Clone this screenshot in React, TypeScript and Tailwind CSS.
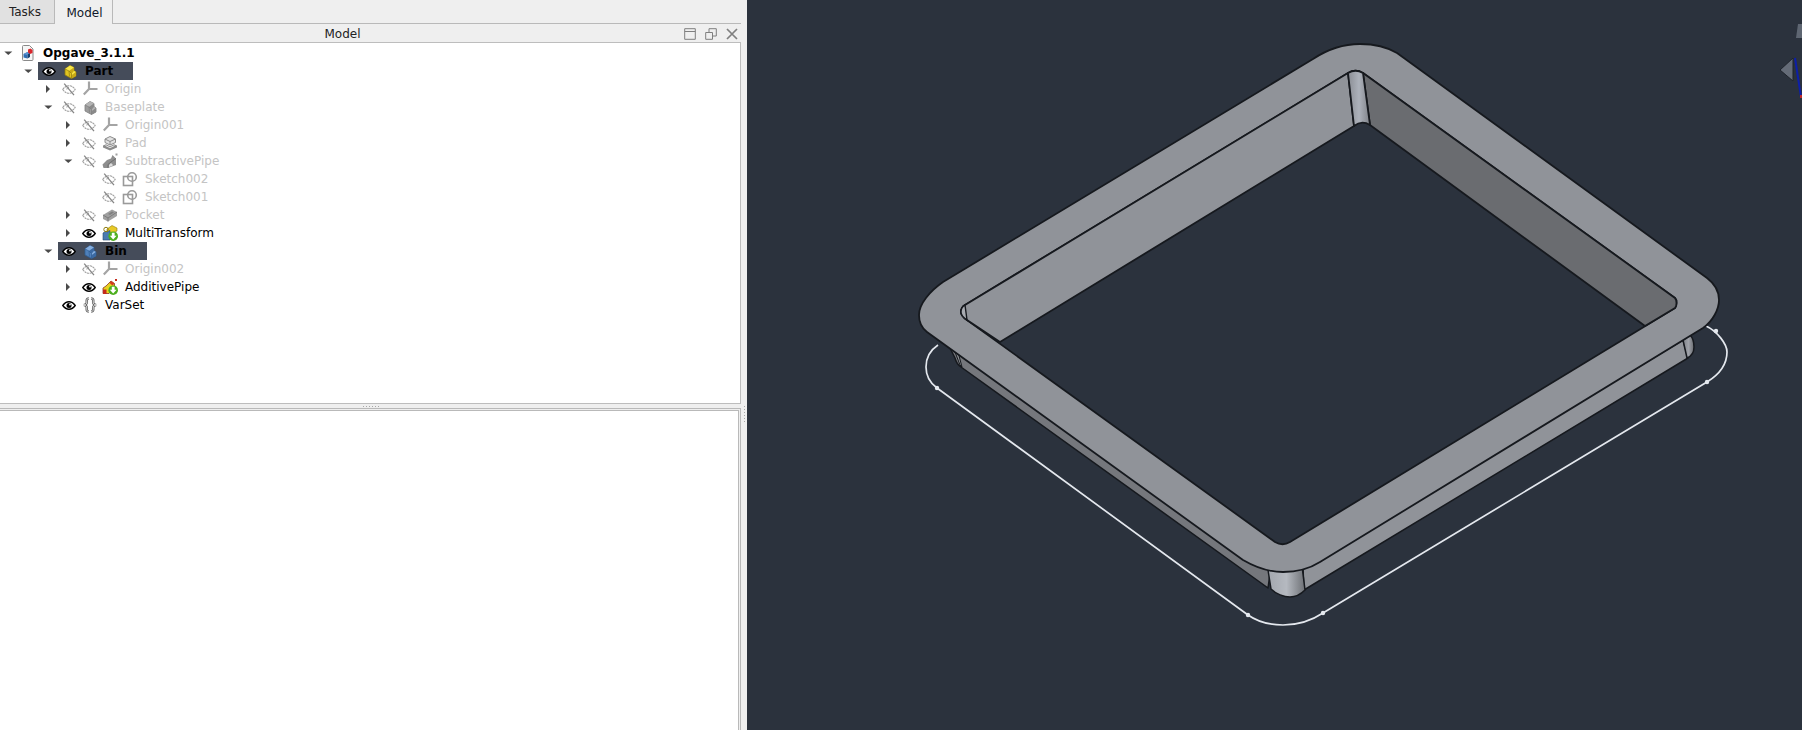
import React from "react";

function Arrow({ open }: { open: boolean }) {
  return (
    <svg width="16" height="18" viewBox="0 0 16 18" className="shrink-0">
      {open ? <path d="M4.300 7.500h8l-4 3.500z" fill="#4a4a4a" /> : <path d="M6 5l4 4-4 4z" fill="#4a4a4a" />}
    </svg>
  );
}

function Eye({ off }: { off?: boolean }) {
  const almond = "M.8 6.500c1.700-2.500 3.700-3.800 6.200-3.800s4.500 1.300 6.200 3.800c-1.700 2.500-3.700 3.800-6.200 3.800S2.500 9 .8 6.500z";
  if (off) {
    return (
      <svg width="14" height="13" viewBox="0 0 14 13" className="shrink-0">
        <path d={almond} fill="none" stroke="#9e9e9e" strokeWidth="1.100" strokeDasharray="2.200 .6" />
        <path d="M2.200 .6l9.800 11.600" stroke="#858585" strokeWidth="1.300" />
        <path d="M4.800 6.500a2.200 2.200 0 0 1 2.200-2.200" stroke="#9e9e9e" fill="none" />
      </svg>
    );
  }
  return (
    <svg width="14" height="13" viewBox="0 0 14 13" className="shrink-0">
      <path d={almond} fill="#fff" stroke="#000" strokeWidth="1.400" />
      <circle cx="7" cy="6.500" r="2.500" fill="#000" />
      <circle cx="8" cy="5.500" r=".9" fill="#fff" />
    </svg>
  );
}

function LBlock({ top, side, front, dark }: { top: string; side: string; front: string; dark: string }) {
  return (
    <svg width="16" height="16" viewBox="0 0 16 16">
      <path d="M3 6L8 2.500 12 4.500V7.500L14 9V13L9.500 15.500 3 12z" fill={front} stroke={side} strokeWidth=".8" strokeLinejoin="round" />
      <path d="M3 6L8 2.500 12 4.500 7 8z" fill={top} />
      <path d="M9.500 11L12 8 14 9 10 12z" fill={top} />
      <path d="M10 12L14 9V13L9.500 15.500z" fill={dark} />
      <path d="M7 8L12 4.500V7.500L9.500 10.500z" fill={dark} />
      <path d="M3 6L7 8 7.500 13.500M7 8L9.500 10.500 9.500 15.500" fill="none" stroke={side} strokeWidth=".7" />
    </svg>
  );
}

function OriginIcon() {
  return (
    <svg width="16" height="16" viewBox="0 0 16 16">
      <path d="M7 8V.5M7 8H15.500M7 8L1.800 13.500" stroke="#a4a4a4" strokeWidth="2.200" fill="none" />
    </svg>
  );
}

function PadIcon() {
  return (
    <svg width="16" height="16" viewBox="0 0 16 16">
      <path d="M3 4l5-2.500L13.500 4v3.500L8 10 3 7.500z" fill="#e2e2e2" stroke="#8c8c8c" />
      <path d="M3 4l5 2.500L13.500 4M8 6.500V10" fill="none" stroke="#8c8c8c" />
      <path d="M1 10.500l3-1.200 4 2 4-2 3 1.200v2L8 15.500 1 12.500z" fill="#8c8c8c" />
      <path d="M3.500 10.500L8 12.700l4.500-2.200" fill="none" stroke="#e2e2e2" />
    </svg>
  );
}

function SubPipeIcon() {
  return (
    <svg width="16" height="16" viewBox="0 0 16 16">
      <path d="M0.500 11.500L5 7l4-1.500 1.500-3.500L14 5.500V12L6 15H1.500z" fill="#8e8e8e" />
      <path d="M6 15v-3.500L9 9l5-3.500" fill="none" stroke="#6f6f6f" />
      <path d="M7 14v-2l2-2 1.500 1.500V13z" fill="#dcdcdc" />
      <rect x="13.500" y="0.500" width="2" height="2" fill="#a0a0a0" />
    </svg>
  );
}

function SketchIcon() {
  return (
    <svg width="16" height="16" viewBox="0 0 16 16">
      <rect x="1.500" y="5.500" width="9" height="9" fill="#fff" stroke="#9a9a9a" strokeWidth="1.600" />
      <circle cx="10" cy="6" r="4.300" fill="none" stroke="#9a9a9a" strokeWidth="1.600" />
    </svg>
  );
}

function PocketIcon() {
  return (
    <svg width="16" height="16" viewBox="0 0 16 16">
      <path d="M1 8l9-5.500L15 5v4l-9 5.500L1 12z" fill="#a0a0a0" />
      <path d="M1 8l5 3 9-6M6 11v3.500" fill="none" stroke="#7c7c7c" />
      <path d="M6 7l4-2.400 2 1-4 2.400z" fill="#808080" />
    </svg>
  );
}

function GreenBadge() {
  return (
    <g>
      <circle cx="11.200" cy="11.200" r="4.800" fill="#4caf1e" />
      <path d="M9.800 7.800h2.800v3h2l-3.400 3.800-3.400-3.800h2z" fill="#fff" />
    </g>
  );
}

function MultiIcon() {
  return (
    <svg width="16" height="16" viewBox="0 0 16 16">
      <path d="M5 4l5-3.500L15 3v3l-6 3-4-2z" fill="#e8c926" stroke="#8d7b12" strokeWidth=".6" />
      <path d="M1 8l3-2 1 1 3-1.500V15H1z" fill="#4a7bb0" stroke="#24496f" strokeWidth=".6" />
      <circle cx="4" cy="4.500" r="2.200" fill="none" stroke="#8d7b12" />
      <GreenBadge />
    </svg>
  );
}

function AddPipeIcon() {
  return (
    <svg width="16" height="16" viewBox="0 0 16 16">
      <path d="M1 9l3-2 5-5 3.500 2.500V9L7 14.500H1z" fill="#e6d21f" stroke="#7c1d14" strokeWidth=".7" />
      <path d="M1 10.500h3.500V15H1z" fill="#c42a1c" />
      <path d="M9 2l3.500 2.500-2 2L7.500 4z" fill="#d23a22" />
      <rect x="13" y="0" width="2" height="2" fill="#c42a1c" />
      <GreenBadge />
    </svg>
  );
}

function VarSetIcon() {
  const d =
    "M6.800 1.500C4.300 1.500 4.800 3.500 4.800 5S4.800 7.500 2 8c2.800.5 2.800 1.500 2.800 3s-.5 3.500 2 3.500M9.200 1.500c2.500 0 2 2 2 3.500s0 2.500 2.800 3c-2.800.5-2.800 1.500-2.800 3s.5 3.500-2 3.500";
  return (
    <svg width="16" height="16" viewBox="0 0 16 16">
      <path d={d} fill="none" stroke="#555" strokeWidth="2.500" />
      <path d={d} fill="none" stroke="#eee" strokeWidth=".9" />
    </svg>
  );
}

function DocIcon() {
  return (
    <svg width="16" height="16" viewBox="0 0 16 16">
      <path d="M2.500 1.500a1 1 0 0 1 1-1h6l3.500 3.500v10.500a1 1 0 0 1-1 1h-8.500a1 1 0 0 1-1-1z" fill="#f6f6f6" stroke="#8a8a8a" />
      <path d="M3.500 9l4-2v6.500l-4-1z" fill="#2f6db3" />
      <path d="M7.500 7l2.500 1v4l-2.500 1.500z" fill="#17406f" />
      <path d="M3.500 9l4-2 2.500 1-3.500 2z" fill="#5b93d1" />
      <path d="M8 4.500l2.500-1 2 1.500v3l-2.500 1-2-1.500z" fill="#d9262c" />
    </svg>
  );
}

type Row = {
  depth: 0 | 1 | 2 | 3 | 4;
  label: string;
  arrow?: "open" | "closed";
  eye?: "on" | "off";
  icon: React.ReactNode;
  selected?: boolean;
  bold?: boolean;
  dim?: boolean;
};

const depthClass: Record<number, string> = {
  0: "pl-0",
  1: "pl-[20px]",
  2: "pl-[40px]",
  3: "pl-[60px]",
  4: "pl-[80px]",
};

const rows: Row[] = [
  { depth: 0, label: "Opgave_3.1.1", arrow: "open", icon: <DocIcon />, bold: true },
  { depth: 1, label: "Part", arrow: "open", eye: "on", selected: true, bold: true, icon: <LBlock top="#f6e64a" side="#8f7a10" front="#e0c420" dark="#c7a916" /> },
  { depth: 2, label: "Origin", arrow: "closed", eye: "off", dim: true, icon: <OriginIcon /> },
  { depth: 2, label: "Baseplate", arrow: "open", eye: "off", dim: true, icon: <LBlock top="#b4b4b4" side="#7d7d7d" front="#9c9c9c" dark="#8a8a8a" /> },
  { depth: 3, label: "Origin001", arrow: "closed", eye: "off", dim: true, icon: <OriginIcon /> },
  { depth: 3, label: "Pad", arrow: "closed", eye: "off", dim: true, icon: <PadIcon /> },
  { depth: 3, label: "SubtractivePipe", arrow: "open", eye: "off", dim: true, icon: <SubPipeIcon /> },
  { depth: 4, label: "Sketch002", eye: "off", dim: true, icon: <SketchIcon /> },
  { depth: 4, label: "Sketch001", eye: "off", dim: true, icon: <SketchIcon /> },
  { depth: 3, label: "Pocket", arrow: "closed", eye: "off", dim: true, icon: <PocketIcon /> },
  { depth: 3, label: "MultiTransform", arrow: "closed", eye: "on", icon: <MultiIcon /> },
  { depth: 2, label: "Bin", arrow: "open", eye: "on", selected: true, bold: true, icon: <LBlock top="#86aede" side="#2f5d93" front="#4f80ba" dark="#3c6aa3" /> },
  { depth: 3, label: "Origin002", arrow: "closed", eye: "off", dim: true, icon: <OriginIcon /> },
  { depth: 3, label: "AdditivePipe", arrow: "closed", eye: "on", icon: <AddPipeIcon /> },
  { depth: 2, label: "VarSet", eye: "on", icon: <VarSetIcon /> },
];

function TreeRow({ row }: { row: Row }) {
  return (
    <div className={`flex h-[18px] items-center ${depthClass[row.depth]}`}>
      <div className="w-[18px] shrink-0">{row.arrow ? <Arrow open={row.arrow === "open"} /> : null}</div>
      <div className={`flex h-[18px] items-center ${row.depth === 0 ? "pl-[2px]" : "pl-[4px]"} ${row.selected ? "bg-[#454c5a] pr-[20px]" : ""}`}>
        {row.eye ? (
          <div className="mr-[6px] flex w-[14px] shrink-0 justify-center">
            <Eye off={row.eye === "off"} />
          </div>
        ) : null}
        <div className="flex w-[16px] shrink-0 items-center justify-center">{row.icon}</div>
        <span
          className={`ml-[7px] whitespace-nowrap text-[12px] leading-[18px] ${row.bold ? "font-bold" : ""} ${row.dim ? "text-[#c4c4c4]" : "text-black"}`}
        >
          {row.label}
        </span>
      </div>
    </div>
  );
}

function Dots({ vertical }: { vertical?: boolean }) {
  return (
    <div className={vertical ? "flex flex-col gap-[2px]" : "flex gap-[2px]"}>
      {[0, 1, 2, 3, 4, 5].map((i) => (
        <span key={i} className="h-px w-px bg-[#a8a8a8]" />
      ))}
    </div>
  );
}

function Viewport() {
  const top = "#909399";
  const line = "#16191e";
  return (
    <svg viewBox="747 0 1055 730" className="h-full w-full" preserveAspectRatio="none">
      <defs>
        <linearGradient id="cyl1" x1="0" x2="1" y1="0" y2="0">
          <stop offset="0" stopColor="#8a8d94" />
          <stop offset=".5" stopColor="#adb2bb" />
          <stop offset="1" stopColor="#7e8187" />
        </linearGradient>
        <linearGradient id="cyl2" x1="0" x2="1" y1="0" y2="0">
          <stop offset="0" stopColor="#a3a7ae" />
          <stop offset=".5" stopColor="#b5b9c0" />
          <stop offset="1" stopColor="#6d7075" />
        </linearGradient>
        <linearGradient id="cyl3" x1="0" x2="1" y1="0" y2="0">
          <stop offset="0" stopColor="#7f8288" />
          <stop offset=".5" stopColor="#9fa2a9" />
          <stop offset="1" stopColor="#6a6c71" />
        </linearGradient>
      </defs>

      <path d="M1798 24l-2 14h6V24z" fill="#5e6672" />
      <path d="M1793 58l-13 12 13 11z" fill="#646b77" stroke="#1f242c" />
      <path d="M1795 58l6 39" stroke="#0d1fa8" strokeWidth="2" fill="none" />
      <rect x="1800" y="95" width="2" height="3" fill="#c02a2a" />

      <path
        d="M938 345C929 351 926 359 926 367C926 376 930 383 937 388L1248 615C1258 622 1270 625 1283 625C1298 625 1311 621 1323 613L1707 382C1720 374 1727 364 1727 352C1727 344 1717 331 1706 326"
        fill="none"
        stroke="#e4e8ee"
        strokeWidth="1.700"
      />
      <circle cx="937" cy="388" r="2.200" fill="#e4e8ee" />
      <circle cx="1248" cy="615" r="2.200" fill="#e4e8ee" />
      <circle cx="1323" cy="613" r="2.200" fill="#e4e8ee" />
      <circle cx="1707" cy="382" r="2.200" fill="#e4e8ee" />
      <circle cx="1716" cy="331" r="2.200" fill="#e4e8ee" />

      <path d="M950 348L955 358C956 362 958 365 961 367L1268 588L1272 560z" fill="#75777c" stroke={line} strokeWidth="1.500" strokeLinejoin="round" />
      <path d="M1303 568L1304 590L1688 358L1683 340z" fill={top} stroke={line} strokeWidth="1.500" strokeLinejoin="round" />
      <path d="M1268 570L1271 589C1276 594 1284 597 1290 597C1296 597 1301 594 1305 590L1302 566z" fill="url(#cyl2)" stroke={line} strokeWidth="1.500" strokeLinejoin="round" />
      <path d="M1683 340L1687 358C1692 356 1694 352 1694 347C1694 342 1693 338 1690 335z" fill="url(#cyl3)" stroke={line} strokeWidth="1.500" strokeLinejoin="round" />
      <path d="M955 352L960 365L962 367L958 352z" fill="#8a8d92" stroke={line} />

      <path
        fillRule="evenodd"
        d="M1313 59C1328 49 1343 44 1360 44C1374 44 1387 47 1397 53L1707 278C1715 284 1719 292 1719 300C1719 309 1713 321 1703 328L1320 562C1309 569 1296 572 1283 572C1268 572 1255 567 1243 560L927 332C923 329 919 323 919 315C919 304 930 291 943 282z M1348 73L965 305C962 307 961 310 961 312C961 316 964 318 967 320L1275 542C1280 545 1285 545 1290 542L1675 308C1677 306 1677 300 1675 298L1363 73C1358 70 1353 70 1348 73z"
        fill={top}
        stroke={line}
        strokeWidth="1.800"
        strokeLinejoin="round"
      />

      <path d="M1348 73L965 305C962 307 961 310 961 312C961 316 964 318 967 320L1000 342L1354 126z" fill={top} stroke={line} strokeWidth="1.800" strokeLinejoin="round" />
      <path d="M1363 73L1675 298C1677 300 1677 306 1675 308L1645 326L1370 125z" fill="#6a6c70" stroke={line} strokeWidth="1.800" strokeLinejoin="round" />
      <path d="M1348 73C1353 70 1358 70 1363 73L1370 125C1365 122 1359 122 1354 126z" fill="url(#cyl1)" stroke={line} strokeWidth="1.800" strokeLinejoin="round" />
      <path d="M961 312C961 308 963 306 965 305L967 320C964 318 961 316 961 312z" fill="#a8abb1" stroke={line} strokeWidth="1.400" />
    </svg>
  );
}

export default function App() {
  return (
    <div className="flex h-[730px] w-[1802px] overflow-hidden bg-[#efefef] font-['DejaVu_Sans',sans-serif] text-[12px]">
      <div className="flex h-full w-[741px] shrink-0 flex-col">
        <div className="flex h-[24px] shrink-0 items-stretch border-b border-[#b9b9b9]">
          <div className="flex h-[23px] w-[55px] items-center justify-center border-r border-[#b9b9b9] bg-[#e1e1e1] pr-[4px] pt-[1px] text-[12px] text-[#222]">
            Tasks
          </div>
          <div className="z-10 mb-[-1px] flex h-[24px] w-[58px] items-center justify-center border-r border-[#b9b9b9] bg-[#efefef] pl-[2px] pt-[1px] text-[12px] text-[#10182a]">
            Model
          </div>
          <div className="flex-1" />
        </div>
        <div className="relative flex h-[18px] shrink-0 items-center justify-center pr-[56px] pt-[2px] text-[12px] text-[#222]">
          Model
          <div className="absolute right-[3px] top-[4px] flex items-center gap-[9px]">
            <svg width="12" height="12" viewBox="0 0 12 12">
              <path d="M.7.700h10.600v10.600H.7zM.7 3.500h10.600" fill="none" stroke="#7f7f7f" />
            </svg>
            <svg width="12" height="12" viewBox="0 0 12 12">
              <path d="M.7 4.500h6.800v6.800H.7zM4 4.500V.7h7.300V8H7.500" fill="none" stroke="#7f7f7f" />
            </svg>
            <svg width="12" height="12" viewBox="0 0 12 12">
              <path d="M1 1l10 10M11 1L1 11" stroke="#7f7f7f" strokeWidth="1.700" />
            </svg>
          </div>
        </div>
        <div className="h-[362px] shrink-0 overflow-hidden border border-l-0 border-[#bdbdbd] bg-white pt-px">
          {rows.map((r) => (
            <TreeRow key={r.label} row={r} />
          ))}
        </div>
        <div className="flex h-[4px] shrink-0 items-center justify-center">
          <Dots />
        </div>
        <div className="flex-1 border-t border-r border-[#b9b9b9] pr-[1px] pt-[1px]">
          <div className="h-full border-t border-r border-[#b9b9b9] bg-white" />
        </div>
      </div>
      <div className="flex w-[6px] shrink-0 flex-col items-center pt-[406px]">
        <Dots vertical />
      </div>
      <div className="h-full flex-1 bg-[#2b323d]">
        <Viewport />
      </div>
    </div>
  );
}
